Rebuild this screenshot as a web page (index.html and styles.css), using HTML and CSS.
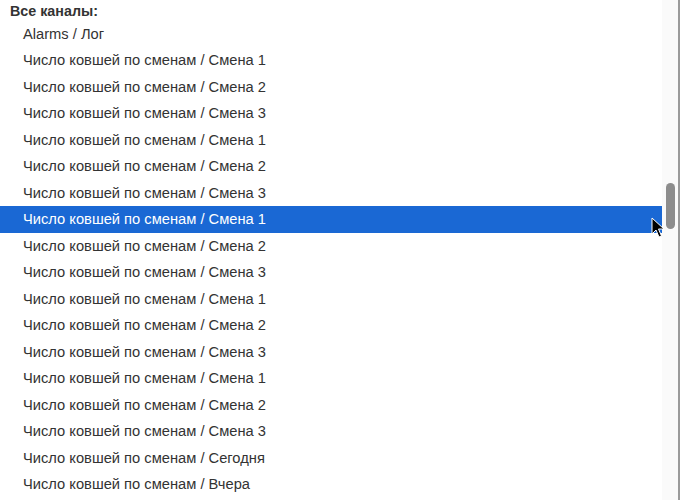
FILE: index.html
```html
<!DOCTYPE html>
<html lang="ru">
<head>
<meta charset="utf-8">
<link rel="stylesheet" href="styles.css">
</head>
<body>
<div class="frame">
  <div class="content">
    <div class="title">Все каналы:</div>
    <ul class="list">
      <li class="item">Alarms / Лог</li>
      <li class="item">Число ковшей по сменам / Смена 1</li>
      <li class="item">Число ковшей по сменам / Смена 2</li>
      <li class="item">Число ковшей по сменам / Смена 3</li>
      <li class="item">Число ковшей по сменам / Смена 1</li>
      <li class="item">Число ковшей по сменам / Смена 2</li>
      <li class="item">Число ковшей по сменам / Смена 3</li>
      <li class="item selected">Число ковшей по сменам / Смена 1</li>
      <li class="item">Число ковшей по сменам / Смена 2</li>
      <li class="item">Число ковшей по сменам / Смена 3</li>
      <li class="item">Число ковшей по сменам / Смена 1</li>
      <li class="item">Число ковшей по сменам / Смена 2</li>
      <li class="item">Число ковшей по сменам / Смена 3</li>
      <li class="item">Число ковшей по сменам / Смена 1</li>
      <li class="item">Число ковшей по сменам / Смена 2</li>
      <li class="item">Число ковшей по сменам / Смена 3</li>
      <li class="item">Число ковшей по сменам / Сегодня</li>
      <li class="item">Число ковшей по сменам / Вчера</li>
    </ul>
  </div>
  <div class="scrollbar"><div class="thumb"></div></div>
  <div class="edge"></div>
  <svg class="cursor" width="14" height="22" viewBox="0 0 14 22">
    <path d="M1 1 L1 17 L5 13 L8 20 L10.5 19 L7.5 12 L13 12 Z" fill="#000" stroke="#fff" stroke-width="1" stroke-linejoin="round"/>
  </svg>
</div>
</body>
</html>
```

FILE: styles.css
```css
html, body {
  margin: 0;
  padding: 0;
  background: #fff;
}
.frame {
  position: relative;
  display: flex;
  width: 680px;
  height: 500px;
  overflow: hidden;
  font-family: "Liberation Sans", Arial, sans-serif;
  font-size: 14.7px;
  color: #333;
}
.content {
  width: 662px;
  flex: none;
}
.title {
  font-weight: bold;
  font-size: 14.3px;
  padding-left: 10px;
  height: 21px;
  line-height: 22px;
}
.list {
  list-style: none;
  margin: 0;
  padding: 0;
}
.item {
  height: 26.47px;
  line-height: 27px;
  padding-left: 23px;
  white-space: nowrap;
}
.item.selected {
  background: #1a68d4;
  color: #fff;
}
.scrollbar {
  width: 16px;
  flex: none;
  background: #fafafa;
  padding-top: 183px;
  box-sizing: border-box;
}
.thumb {
  width: 9px;
  height: 46px;
  margin-left: 4px;
  border-radius: 5px;
  background: #8d8d8d;
}
.edge {
  width: 2px;
  flex: none;
  background: #9a9a9a;
}
.cursor {
  position: absolute;
  left: 651px;
  top: 217px;
}
```
